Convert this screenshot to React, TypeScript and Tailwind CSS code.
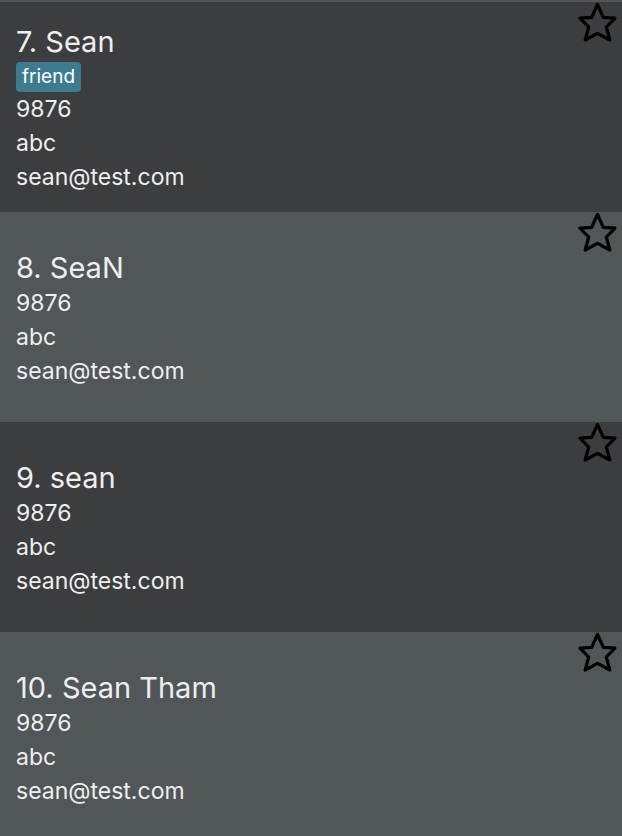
import React from "react";

type Person = { idx: number; name: string; tags: string[] };

const people: Person[] = [
  { idx: 7, name: "Sean", tags: ["friend"] },
  { idx: 8, name: "SeaN", tags: [] },
  { idx: 9, name: "sean", tags: [] },
  { idx: 10, name: "Sean Tham", tags: [] },
];

function Star() {
  return (
    <svg width="39" height="40" viewBox="0 0 39 40" className="shrink-0">
      <polygon
        points="19.5,2.5 25.3,15.3 37,16.2 28.3,25 31.8,38 19.5,31.3 7.2,38 10.7,25 2,16.2 13.7,15.3"
        fill="none"
        stroke="#000"
        strokeWidth="3.2"
        strokeLinejoin="round"
      />
    </svg>
  );
}

export default function App() {
  return (
    <div
      className="w-[622px] h-[836px] overflow-hidden bg-[#505658] pt-[2px]"
      style={{ fontFamily: "Inter, 'Open Sans', sans-serif" }}
    >
      {people.map((p, i) => (
        <div
          key={p.idx}
          className={`flex h-[210px] pl-4 pr-[5px] ${i % 2 === 0 ? "bg-[#3c3d3f]" : "bg-[#515658]"}`}
        >
          <div className="flex flex-1 flex-col justify-center pt-[4px] text-[#eeeeee]">
            <div className="h-[36px] leading-[36px] text-[29px]">
              {p.idx}. {p.name}
            </div>
            {p.tags.length > 0 && (
              <div className="mt-[2px] flex h-[30px] gap-2">
                {p.tags.map((t) => (
                  <span
                    key={t}
                    className="flex h-[30px] items-center rounded-[4px] bg-[#3e7b91] px-[6px] text-[19px] text-white"
                  >
                    {t}
                  </span>
                ))}
              </div>
            )}
            <div className="h-[34px] leading-[34px] text-[23px]">9876</div>
            <div className="h-[34px] leading-[34px] text-[23px]">abc</div>
            <div className="h-[34px] leading-[34px] text-[23px]">sean@test.com</div>
          </div>
          <div className="self-start">
            <Star />
          </div>
        </div>
      ))}
    </div>
  );
}
